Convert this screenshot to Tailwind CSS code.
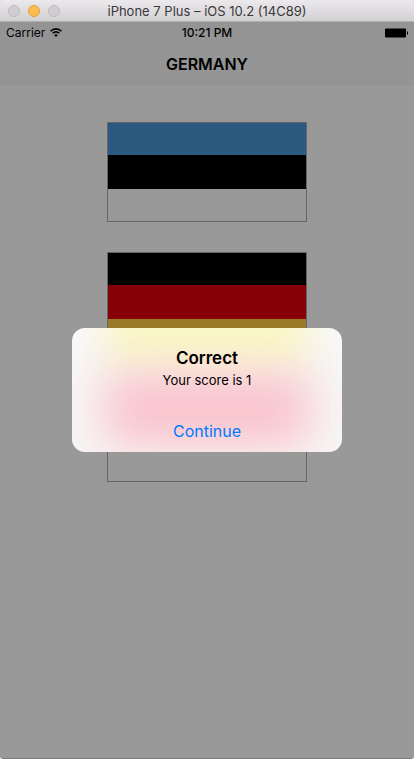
<!DOCTYPE html>
<html lang="en">
<head>
<meta charset="utf-8">
<meta name="viewport" content="width=device-width, initial-scale=1">
<title>Guess the Flag</title>
<script src="https://cdn.jsdelivr.net/npm/@tailwindcss/browser@4"></script>
</head>
<body class="flex min-h-screen flex-col bg-[#e4e2e4] font-['Inter',sans-serif] text-black">
  <header class="relative flex h-[22px] shrink-0 items-center justify-center rounded-t-[5px] border-b border-[#b1afb1] bg-linear-to-b from-[#ebe9eb] to-[#d2d0d2]">
    <div class="absolute left-2 flex gap-2">
      <button aria-label="Close" class="size-3 rounded-full border border-[#bdbbbd] bg-[#d0ced0]"></button>
      <button aria-label="Minimize" class="size-3 rounded-full border border-[#e19d37] bg-[#fdbc4f]"></button>
      <button aria-label="Zoom" class="size-3 rounded-full border border-[#bdbbbd] bg-[#d0ced0]"></button>
    </div>
    <h1 class="pt-px text-[13px] leading-5 text-[#3b393b]">iPhone 7 Plus – iOS 10.2 (14C89)</h1>
  </header>

  <div class="relative flex grow flex-col overflow-hidden rounded-b-[4px] border-b border-[#7e7a7e] bg-[#999999]">
    <div class="h-16 border-b border-[#979797] bg-[#949494]">
      <div class="grid h-5 grid-cols-3 items-center px-[6px] pt-px text-[12px] leading-5">
        <div class="flex items-center gap-[5px]">
          <span>Carrier</span>
          <svg class="mb-px h-[9px] w-3" viewBox="0 0 12 9" fill="none" stroke="#000" stroke-width="1.6" aria-label="Wi-Fi">
            <path d="M.6 3.2C3.6.1 8.4.1 11.4 3.2M2.6 5.3c1.9-1.9 4.9-1.9 6.8 0"/>
            <path d="M6 9 4.1 7.1c1.1-1 2.7-1 3.8 0z" fill="#000" stroke="none"/>
          </svg>
        </div>
        <span class="text-center font-medium">10:21 PM</span>
        <svg class="mb-px h-[10px] w-6 justify-self-end" viewBox="0 0 24 10" aria-label="Battery full">
          <rect x="1" y="0.5" width="21" height="9" rx="1"/>
          <rect x="23" y="3.5" width="1" height="3"/>
        </svg>
      </div>
      <h2 class="pt-[10px] text-center text-[16px] leading-6 font-semibold">GERMANY</h2>
    </div>

    <main class="flex flex-col items-center gap-[30px] pt-9">
      <button aria-label="Flag 1" class="flex h-[100px] w-[200px] flex-col border border-[#666666]">
        <span class="h-8 w-full bg-[#2b5980]"></span>
        <span class="h-[34px] w-full bg-black"></span>
        <span class="h-8 w-full bg-[#999999]"></span>
      </button>
      <button aria-label="Flag 2" class="flex h-[100px] w-[200px] flex-col border border-[#666666]">
        <span class="h-8 w-full bg-black"></span>
        <span class="h-[34px] w-full bg-[#850007]"></span>
        <span class="h-8 w-full bg-[#997a26]"></span>
      </button>
      <button aria-label="Flag 3" class="flex h-[100px] w-[200px] flex-col border border-[#666666]">
        <span class="h-[49px] w-full bg-[#850018]"></span>
        <span class="h-[49px] w-full bg-[#999999]"></span>
      </button>
    </main>

    <div class="absolute inset-0 flex items-center justify-center">
      <div role="alertdialog" aria-labelledby="alert-title" aria-describedby="alert-text" class="relative w-[270px] overflow-hidden rounded-[13px] bg-[#f8f8f7]">
        <div class="absolute inset-x-9 -top-10 h-20 bg-[#faf7c5] blur-[18px]"></div>
        <div class="absolute inset-x-8 top-[46px] h-[72px] bg-[#f9c0ca] blur-[24px]"></div>
        <div class="relative flex flex-col text-center">
          <div class="flex h-20 flex-col pt-[18px]">
            <h3 id="alert-title" class="text-[17px] leading-6 font-semibold">Correct</h3>
            <p id="alert-text" class="text-[13px] leading-5">Your score is 1</p>
          </div>
          <button class="h-11 pt-px text-[16px] leading-[22px] text-[#007aff]">Continue</button>
        </div>
      </div>
    </div>
  </div>
</body>
</html>
